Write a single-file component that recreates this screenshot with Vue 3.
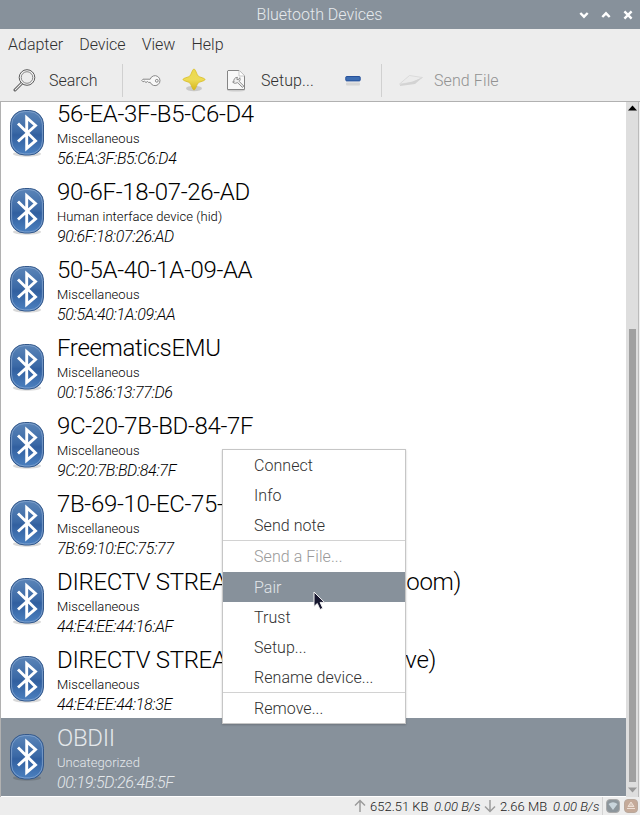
<script setup>
const menus = ['Adapter', 'Device', 'View', 'Help']
const devices = [
  { name: '56-EA-3F-B5-C6-D4', kind: 'Miscellaneous', address: '56:EA:3F:B5:C6:D4' },
  { name: '90-6F-18-07-26-AD', kind: 'Human interface device (hid)', address: '90:6F:18:07:26:AD' },
  { name: '50-5A-40-1A-09-AA', kind: 'Miscellaneous', address: '50:5A:40:1A:09:AA' },
  { name: 'FreematicsEMU', kind: 'Miscellaneous', address: '00:15:86:13:77:D6' },
  { name: '9C-20-7B-BD-84-7F', kind: 'Miscellaneous', address: '9C:20:7B:BD:84:7F' },
  { name: '7B-69-10-EC-75-', kind: 'Miscellaneous', address: '7B:69:10:EC:75:77' },
  { name: 'DIRECTV STREA', tail: 'Room)', width: 404, kind: 'Miscellaneous', address: '44:E4:EE:44:16:AF' },
  { name: 'DIRECTV STREA', tail: 've)', width: 379, kind: 'Miscellaneous', address: '44:E4:EE:44:18:3E' },
  { name: 'OBDII', kind: 'Uncategorized', address: '00:19:5D:26:4B:5F', selected: true },
]
const actions = [
  { label: 'Connect' },
  { label: 'Info' },
  { label: 'Send note' },
  { label: 'Send a File...', disabled: true, divided: true },
  { label: 'Pair', active: true },
  { label: 'Trust' },
  { label: 'Setup...' },
  { label: 'Rename device...' },
  { label: 'Remove...', divided: true },
]
</script>

<template>
  <div class="window">
    <header class="titlebar">
      <h1>Bluetooth Devices</h1>
      <div class="controls">
        <svg width="10" height="10" viewBox="0 0 10 10"><path d="M1.3 3 5 6.7 8.7 3" /></svg>
        <svg width="10" height="10" viewBox="0 0 10 10"><path d="M1.3 7 5 3.3 8.7 7" /></svg>
        <svg width="10" height="10" viewBox="0 0 10 10"><path d="M1.4 1.4 8.6 8.6M8.6 1.4 1.4 8.6" /></svg>
      </div>
    </header>

    <nav class="menubar">
      <span v-for="m in menus" :key="m">{{ m }}</span>
    </nav>

    <div class="toolbar">
      <svg class="search-icon" width="24" height="24" viewBox="0 0 24 24" fill="none">
        <path d="M10.5 14.5 3 22" stroke="#555" stroke-width="3" stroke-linecap="round" />
        <path d="M10 15 3.2 21.8" stroke="#eee" stroke-width="1.2" stroke-linecap="round" />
        <circle cx="15" cy="9.5" r="7.8" fill="#f7f7f7" stroke="#5a5a5a" stroke-width="1" />
        <circle cx="15" cy="9.5" r="5.8" fill="#ececec" stroke="#777" stroke-width="0.9" />
      </svg>
      <span class="search-label">Search</span>
      <i class="divider first"></i>
      <svg class="key-icon" width="20" height="12" viewBox="0 0 20 12" fill="#f8f8f8" stroke="#888" stroke-width="1">
        <path d="M9.2 4.2H2L.8 5.5 2 6.8 3.5 6.2 5 7.5 6.5 6.5 7.5 7.4H9.3A5 5 0 1 0 9.2 4.2Z" />
        <circle cx="15.8" cy="5.8" r="1.4" />
      </svg>
      <svg class="star-icon" width="24" height="24" viewBox="0 0 24 24">
        <defs>
          <linearGradient id="gold" x1="0" y1="0" x2="0" y2="1">
            <stop offset="0" stop-color="#ecd94e" /><stop offset="0.5" stop-color="#eddb55" /><stop offset="1" stop-color="#d6b61a" />
          </linearGradient>
        </defs>
        <ellipse cx="12" cy="20.5" rx="8" ry="2.7" fill="#000" opacity=".15" />
        <path d="M12 1C13.5 1 14.8 6.6 16.2 8 17.6 9.4 23 10 23 11.5S17.6 13.600 16.2 15 13.5 22 12 22 9.2 16.4 7.8 15 1 13 1 11.5 6.4 9.4 7.8 8 10.5 1 12 1Z" fill="url(#gold)" stroke="#d5b91c" stroke-width=".7" />
      </svg>
      <svg class="page-icon" width="20" height="23" viewBox="0 0 20 23" fill="none">
        <ellipse cx="10" cy="21.3" rx="9" ry="1.3" fill="#ccc" />
        <path d="M2 1.5H13L18.5 7V20.5H1.5V2Z" fill="#f8f8f8" stroke="#858585" />
        <path d="M13 1.5V7H18.5" fill="#fff" stroke="#bbb" stroke-width=".8" />
        <path d="M11.5 8.3A3.5 3.5 0 0 0 8 13L6.7 12.8 7.6 14 9.2 14.3 11.6 13.7 16.5 18.4 17.8 17 13.3 12.5A3.5 3.5 0 0 0 13.8 8.7L12.3 10.8 10.8 10.3Z" fill="#eee" stroke="#777" stroke-width=".8" />
      </svg>
      <span class="setup-label">Setup...</span>
      <svg class="minus-icon" width="16" height="12" viewBox="0 0 16 12">
        <rect x="1" y="7.5" width="14" height="3" rx="1" fill="#d6d6d6" />
        <rect x=".8" y="1.5" width="14.4" height="4.4" rx=".8" fill="#3d6db2" stroke="#27519a" />
      </svg>
      <i class="divider second"></i>
      <svg class="plane-icon" width="26" height="14" viewBox="0 0 26 14">
        <path d="M1.500 10 11.500 1.500 24.500 3.500 15 8.500Z" fill="#ebebeb" stroke="#d6d6d6" stroke-width=".8" />
        <path d="M2 10.500 14.500 7.500 24.500 3.500 17 10 2 12Z" fill="#d3d3d3" />
      </svg>
      <span class="send-label">Send File</span>
    </div>

    <main class="pane">
      <div class="list">
        <article v-for="d in devices" :key="d.address" class="device" :class="{ selected: d.selected }">
          <svg class="bt" width="36" height="50" viewBox="0 0 36 50">
            <defs>
              <linearGradient id="blue" x1="0" y1="0" x2="0" y2="1">
                <stop offset="0" stop-color="#5b85b8" /><stop offset="0.48" stop-color="#3b69a6" /><stop offset=".55" stop-color="#315f9f" /><stop offset="1" stop-color="#4c81c0" />
              </linearGradient>
            </defs>
            <ellipse cx="18" cy="45" rx="14" ry="2.700" fill="#000" opacity=".15" />
            <rect x="1.5" y="1.5" width="33" height="44.500" rx="14" fill="url(#blue)" stroke="#34588a" />
            <rect x="2.600" y="2.600" width="30.800" height="42.300" rx="13" fill="none" stroke="#86a6cf" stroke-width=".8" />
            <path d="M9 14.500 26.500 31.800 17.700 39.300V8.700L26.500 16.500 9 32.500" fill="none" stroke="#fff" stroke-width="2.900" />
          </svg>
          <div class="details">
            <h2 :style="d.width ? { width: d.width + 'px' } : null">
              <span>{{ d.name }}</span><span v-if="d.tail">{{ d.tail }}</span>
            </h2>
            <p class="kind">{{ d.kind }}</p>
            <p class="address">{{ d.address }}</p>
          </div>
        </article>
      </div>
      <div class="scrollbar">
        <svg width="9" height="6" viewBox="0 0 9 6"><path d="M0 5.5 4.5.5 9 5.5Z" fill="#000" /></svg>
        <i class="thumb"></i>
        <svg width="9" height="6" viewBox="0 0 9 6"><path d="M0 .5 4.5 5.5 9 .5Z" fill="#999" /></svg>
      </div>
    </main>

    <footer class="status">
      <svg class="arrow" width="12" height="14" viewBox="0 0 12 14"><path d="M6 13V1.5M1 6.5 6 1.5 11 6.5" /></svg>
      <span class="up">652.51 KB</span>
      <em class="up-rate">0.00 B/s</em>
      <svg class="arrow" width="12" height="14" viewBox="0 0 12 14"><path d="M6 1V12.5M1 7.5 6 12.5 11 7.5" /></svg>
      <span class="down">2.66 MB</span>
      <em class="down-rate">0.00 B/s</em>
      <i class="status-divider"></i>
      <svg class="badge" width="14" height="14" viewBox="0 0 14 14">
        <rect x=".5" y=".5" width="13" height="13" rx="3.5" fill="#8d969c" stroke="#aaa" />
        <path d="M2.5 5Q7 1.5 11.5 5L7 11Z" fill="#c9d5dc" />
      </svg>
      <svg class="badge" width="14" height="14" viewBox="0 0 14 14">
        <rect x=".5" y=".5" width="13" height="13" rx="3.5" fill="#c5aa99" stroke="#b9a89c" />
        <path d="M3 9.5H11M4 7.5 7 3 10 7.5Z" fill="#d8c5b8" stroke="#eee0d6" />
      </svg>
    </footer>

    <div class="context-menu">
      <div v-for="a in actions" :key="a.label" class="action" :class="{ disabled: a.disabled, active: a.active, divided: a.divided }">{{ a.label }}</div>
    </div>
    <svg class="cursor" width="13" height="20" viewBox="0 0 13 20">
      <path d="M1 1V15.5L4.3 12.5 7 18.5 9.8 17.2 7.1 11.4H11.5Z" fill="#17172f" stroke="#f4f4f4" stroke-width="1" />
    </svg>
  </div>
</template>

<style>
body { background: #ededed; }
</style>

<style scoped>
.window { position: relative; width: 640px; height: 815px; overflow: hidden; display: flex; flex-direction: column; background: #ededed; color: #303030; font-family: Roboto, sans-serif; font-weight: 300; font-size: 16px; }
svg { display: block; flex: none; }
h1, h2, p { margin: 0; font-weight: 300; }
span, em, h2, p { white-space: nowrap; }
.titlebar { height: 29px; flex: none; display: grid; grid-template-columns: 63px 1fr 64px; background: #87919b; color: #e6eaed; }
.titlebar h1 { grid-column: 2; text-align: center; font-size: 16px; line-height: 29px; }
.controls { display: flex; align-items: center; gap: 12px; padding-left: 3px; }
.controls path { fill: none; stroke: #fff; stroke-width: 2.4; }
.menubar { height: 31px; flex: none; display: flex; gap: 16px; padding-left: 8px; line-height: 31px; }
.toolbar { height: 41px; flex: none; display: flex; align-items: center; padding-left: 12px; line-height: 40px; }
.search-icon { margin-top: -2px; }
.search-label { width: 50px; margin-left: 13px; }
.divider { height: 33px; width: 1px; background: #d0d0d0; }
.divider.first { margin-left: 23px; }
.key-icon { margin-left: 18px; }
.star-icon { margin-left: 21px; margin-top: -2px; }
.page-icon { margin-left: 20px; margin-top: -1px; }
.setup-label { width: 54px; margin-left: 15px; letter-spacing: .1px; }
.minus-icon { margin-left: 29.5px; }
.divider.second { margin-left: 20.5px; }
.plane-icon { margin-left: 16px; }
.send-label { margin-left: 10px; color: #929292; letter-spacing: .1px; }
.pane { height: 696px; flex: none; box-sizing: border-box; display: flex; border-top: 1px solid #b1b1b1; border-left: 1px solid #b1b1b1; }
.list { width: 625px; height: 695px; overflow: hidden; background: #fff; }
.device { height: 78px; display: flex; color: #000; }
.device:first-child { margin-top: -8px; }
.device.selected { background: #87919b; color: #e4e8eb; }
.bt { margin: 15px 0 0 8px; }
.details { margin-left: 12px; }
h2 { display: flex; justify-content: space-between; font-size: 24px; line-height: 29px; height: 35px; padding-top: 6px; box-sizing: border-box; letter-spacing: -.33px; }
.kind { font-size: 13px; line-height: 19px; letter-spacing: .05px; }
.address { font-size: 16px; line-height: 21px; font-style: italic; letter-spacing: -.35px; }
.scrollbar { flex: 1; display: flex; flex-direction: column; align-items: center; background: linear-gradient(90deg, #dedede 0 12px, #bbb 12px 13px, #eee 13px); padding: 3px 1px 4px 0; box-sizing: border-box; }
.thumb { width: 7px; height: 453px; margin: auto 0 5px; background: #a0a0a0; }
.status { flex: 1; display: flex; align-items: center; padding-left: 354px; font-size: 13px; color: #222; font-weight: 300; }
.arrow path { fill: none; stroke: #9c9c9c; stroke-width: 1.5; }
.up { width: 60px; margin-left: 4px; }
.up-rate { width: 47px; margin-left: 4px; margin-right: 3px; }
.down { width: 49px; margin-left: 4px; }
.down-rate { width: 47px; margin-left: 4px; }
.status-divider { width: 1px; height: 18px; background: #d4d4d4; margin-left: 2px; }
.badge { margin-left: 3px; }
.badge + .badge { margin-left: 4px; }
.context-menu { position: absolute; left: 222px; top: 449px; width: 184px; box-sizing: border-box; border: 1px solid #c6c6c6; background: #fff; box-shadow: 0 1px 2px #0003; }
.action { height: 30px; line-height: 32px; padding-left: 31px; letter-spacing: .06px; }
.action.divided { border-top: 1px solid #d2d2d2; }
.action.disabled { color: #999; padding-bottom: 1px; }
.action.active { background: #87919b; color: #e2e6e9; }
.cursor { position: absolute; left: 313px; top: 591px; }
</style>
